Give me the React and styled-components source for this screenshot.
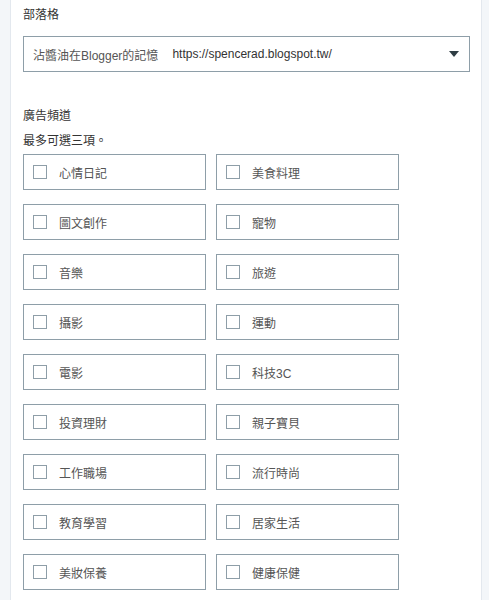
import React from 'react';
import styled, { createGlobalStyle } from 'styled-components';

const Global = createGlobalStyle`
    html, body {
        margin: 0;
        padding: 0;
        background: #f3f6f9;
    }
    body {
        font-family: "Liberation Sans", "Noto Sans CJK TC", Arial, sans-serif;
        color: #333;
    }
`;

const Page = styled.div`
    display: flex;
    min-height: 600px;
    padding-left: 10px;
    padding-right: 7px;
`;

const Panel = styled.div`
    flex: 1;
    background: #fff;
    border-left: 1px solid #e3e8ee;
    border-right: 1px solid #e3e8ee;
    padding: 6px 11px 0 12px;
`;

const Label = styled.div`
    font-size: 12px;
    line-height: 18px;
    color: #333;
`;

const Select = styled.div`
    margin-top: 12px;
    height: 34px;
    border: 1px solid #8e9ea8;
    display: flex;
    align-items: center;
    padding: 0 10px 0 9px;
    font-size: 12px;
    color: #333;
`;

const BlogName = styled.span`
    color: #555;
`;

const Url = styled.span`
    margin-left: 14px;
    flex: 1;
`;

const Arrow = styled.span`
    width: 0;
    height: 0;
    border-left: 5px solid transparent;
    border-right: 5px solid transparent;
    border-top: 6px solid #2f3d44;
`;

const Section = styled.div`
    margin-top: 35px;
`;

const Hint = styled.div`
    margin-top: 7px;
    font-size: 12px;
    line-height: 18px;
    color: #333;
`;

const Grid = styled.div`
    margin-top: 4px;
    display: grid;
    grid-template-columns: 183px 183px;
    column-gap: 10px;
    row-gap: 14px;
`;

const Option = styled.label`
    height: 34px;
    border: 1px solid #8e9ea8;
    display: flex;
    align-items: center;
    padding-left: 9px;
    font-size: 12px;
    color: #555;
    cursor: pointer;
`;

const Box = styled.span`
    box-sizing: border-box;
    flex-shrink: 0;
    width: 14px;
    height: 14px;
    border: 1px solid #8e9ea8;
    margin-right: 12px;
    background: #fff;
`;

const channels = [
    '心情日記', '美食料理',
    '圖文創作', '寵物',
    '音樂', '旅遊',
    '攝影', '運動',
    '電影', '科技3C',
    '投資理財', '親子寶貝',
    '工作職場', '流行時尚',
    '教育學習', '居家生活',
    '美妝保養', '健康保健',
];

const App = () => (
    <>
        <Global />
        <Page>
            <Panel>
                <Label>部落格</Label>
                <Select>
                    <BlogName>沾醬油在Blogger的記憶</BlogName>
                    <Url>https://spencerad.blogspot.tw/</Url>
                    <Arrow />
                </Select>
                <Section>
                    <Label>廣告頻道</Label>
                    <Hint>最多可選三項。</Hint>
                    <Grid>
                        {channels.map(name => (
                            <Option key={name}>
                                <Box />
                                {name}
                            </Option>
                        ))}
                    </Grid>
                </Section>
            </Panel>
        </Page>
    </>
);

export default App;
